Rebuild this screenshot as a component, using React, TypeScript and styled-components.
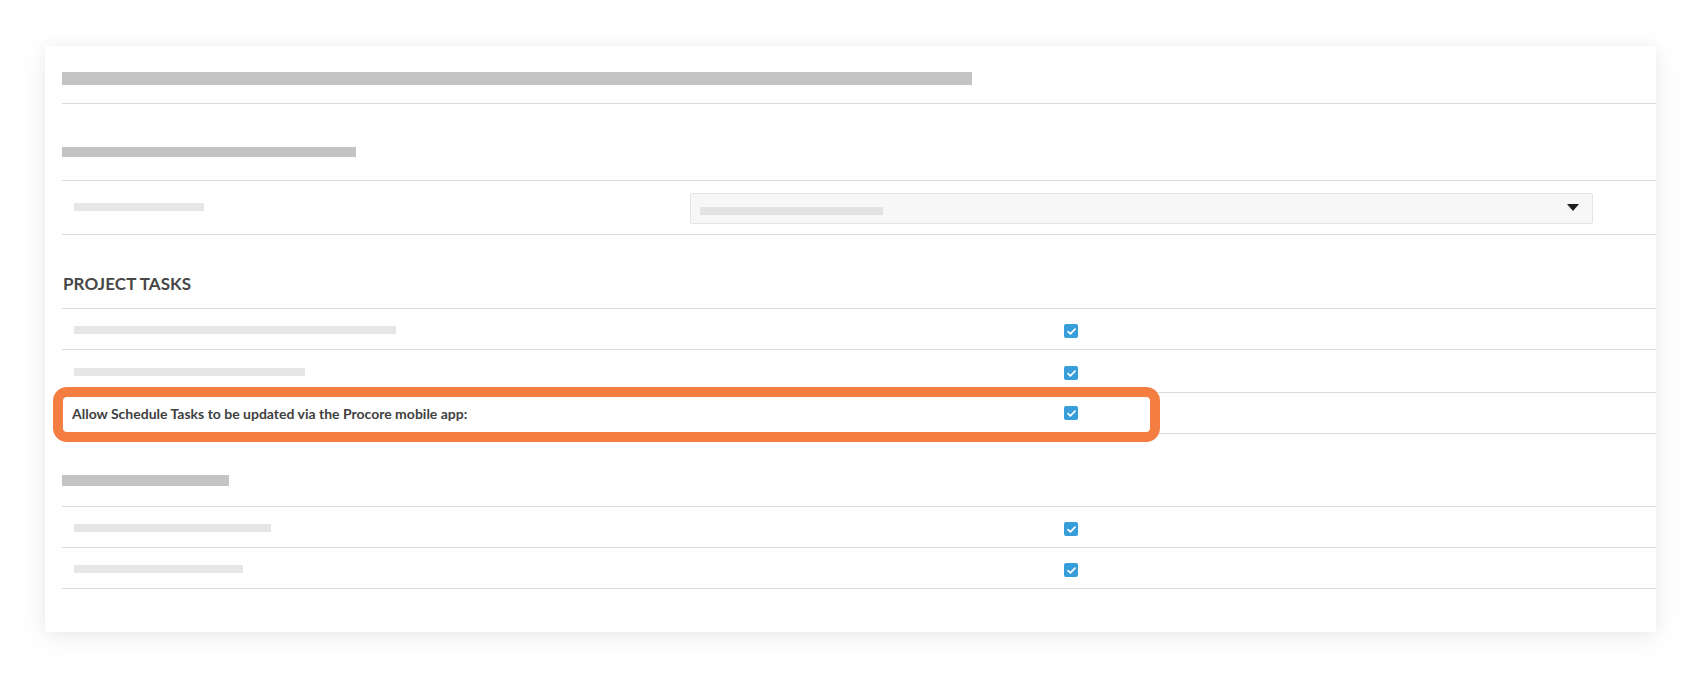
import React from "react";
import styled, { createGlobalStyle } from "styled-components";

const Global = createGlobalStyle`
  html, body { margin: 0; padding: 0; background: #ffffff; }
  body { font-family: Lato, "Open Sans", Arial, sans-serif; }
  * { box-sizing: border-box; }
`;

const Page = styled.div`
  width: 1700px;
  height: 675px;
  padding: 46px 44px 0 45px;
  background: #ffffff;
`;

const Card = styled.div`
  width: 1611px;
  height: 586px;
  background: #ffffff;
  box-shadow: 0 6px 28px rgba(0, 0, 0, 0.07), 0 0 12px rgba(0, 0, 0, 0.04);
  padding: 26px 0 0 17px;
`;

const Section = styled.div<{ $top: number }>`
  margin-top: ${(p) => p.$top}px;
`;

const HeaderBar = styled.div<{ $w: number; $h: number; $below: number }>`
  width: ${(p) => p.$w}px;
  height: ${(p) => p.$h}px;
  background: #c4c4c4;
  margin-bottom: ${(p) => p.$below}px;
`;

const Divider = styled.div`
  height: 1px;
  background: #dcdcdc;
`;

const Heading = styled.h2`
  margin: 0 0 14px 1px;
  font-family: Lato, "Open Sans", Arial, sans-serif;
  font-size: 17px;
  line-height: 20px;
  font-weight: 700;
  color: #474747;
  letter-spacing: 0.1px;
`;

const Row = styled.div<{ $h: number }>`
  position: relative;
  display: flex;
  align-items: center;
  height: ${(p) => p.$h}px;
  border-bottom: 1px solid #dcdcdc;
  padding-left: 12px;
`;

const LabelCell = styled.div<{ $w: number }>`
  width: ${(p) => p.$w}px;
  flex: none;
  display: flex;
  align-items: center;
`;

const LabelBar = styled.div<{ $w: number; $dy?: number }>`
  width: ${(p) => p.$w}px;
  height: 8px;
  background: #e6e6e6;
  margin-top: ${(p) => p.$dy ?? 0}px;
`;

const LabelText = styled.span`
  font-family: Lato, "Open Sans", Arial, sans-serif;
  font-size: 14px;
  font-weight: 700;
  color: #3f3f3f;
  margin-left: -2px;
  position: relative;
  z-index: 1;
`;

const Select = styled.div`
  width: 903px;
  height: 31px;
  background: #f7f7f7;
  border: 1px solid #e4e4e4;
  border-radius: 2px;
  display: flex;
  align-items: center;
  justify-content: space-between;
  padding: 0 13px 0 9px;
  margin-top: 1px;
`;

const SelectPlaceholder = styled.div`
  width: 183px;
  height: 8px;
  background: #e2e2e2;
  margin-top: 5px;
`;

const Caret = styled.div`
  width: 0;
  height: 0;
  border-left: 6px solid transparent;
  border-right: 6px solid transparent;
  border-top: 7px solid #1e1e1e;
  margin-top: -2px;
`;

const Check = styled.div<{ $dy: number }>`
  width: 14px;
  height: 14px;
  border-radius: 2px;
  background: #379ddb;
  display: flex;
  align-items: center;
  justify-content: center;
  position: relative;
  z-index: 1;
  margin-top: ${(p) => p.$dy}px;
`;

const Highlight = styled.div`
  position: absolute;
  left: -9px;
  top: -6px;
  width: 1107px;
  height: 55px;
  border: 10px solid #f47e42;
  border-radius: 14px;
  pointer-events: none;
`;

const CheckBox = ({ dy }: { dy: number }) => (
  <Check $dy={dy}>
    <svg width="9" height="7" viewBox="0 0 9 7">
      <path
        d="M1 3.6 L3.4 5.8 L8 1.2"
        fill="none"
        stroke="#ffffff"
        strokeWidth="1.7"
        strokeLinecap="round"
        strokeLinejoin="round"
      />
    </svg>
  </Check>
);

type CheckRow = { bar?: number; text?: string; h: number; highlight?: boolean };

const taskRows: CheckRow[] = [
  { bar: 322, h: 41 },
  { bar: 231, h: 43 },
  { text: "Allow Schedule Tasks to be updated via the Procore mobile app:", h: 41, highlight: true },
];

const otherRows: CheckRow[] = [
  { bar: 197, h: 41 },
  { bar: 169, h: 41 },
];

const renderRows = (rows: CheckRow[]) =>
  rows.map((r, i) => (
    <Row key={i} $h={r.h}>
      {r.highlight && <Highlight />}
      <LabelCell $w={990}>
        {r.text ? <LabelText>{r.text}</LabelText> : <LabelBar $w={r.bar!} $dy={1} />}
      </LabelCell>
      <CheckBox dy={r.highlight ? 0 : 4} />
    </Row>
  ));

export default function App() {
  return (
    <>
      <Global />
      <Page>
        <Card>
          <Section $top={0}>
            <HeaderBar $w={910} $h={13} $below={18} />
            <Divider />
          </Section>

          <Section $top={43}>
            <HeaderBar $w={294} $h={10} $below={23} />
            <Divider />
            <Row $h={54}>
              <LabelCell $w={616}>
                <LabelBar $w={130} $dy={-2} />
              </LabelCell>
              <Select>
                <SelectPlaceholder />
                <Caret />
              </Select>
            </Row>
          </Section>

          <Section $top={39}>
            <Heading>PROJECT TASKS</Heading>
            <Divider />
            {renderRows(taskRows)}
          </Section>

          <Section $top={41}>
            <HeaderBar $w={167} $h={11} $below={20} />
            <Divider />
            {renderRows(otherRows)}
          </Section>
        </Card>
      </Page>
    </>
  );
}
